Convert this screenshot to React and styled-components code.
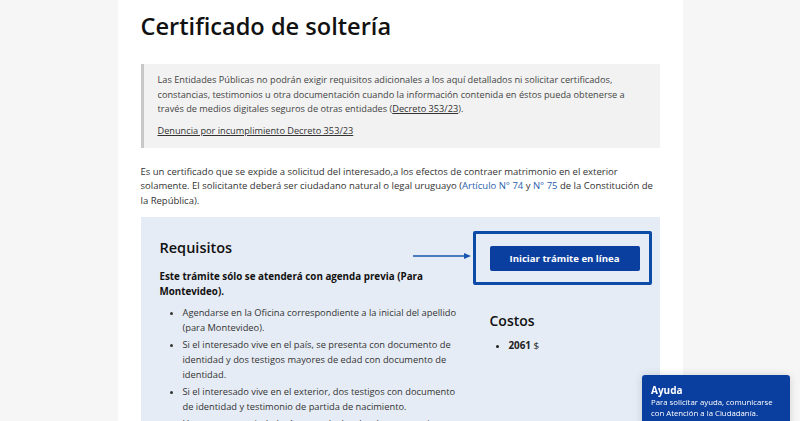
import React from "react";
import styled, { createGlobalStyle } from "styled-components";

const GlobalStyle = createGlobalStyle`
  html, body { margin: 0; padding: 0; }
  body {
    background: #f6f6f6;
    font-family: "Open Sans", "Noto Sans", sans-serif;
    color: #222;
    overflow: hidden;
  }
`;

const Page = styled.div`
  display: flex;
  justify-content: center;
  min-height: 421px;
`;

const Main = styled.main`
  width: 565px;
  background: #fff;
  padding: 0 23px;
  box-sizing: border-box;
`;

const Title = styled.h1`
  margin: 9px 0 0;
  font-size: 23.6px;
  font-weight: 600;
  line-height: 34px;
  color: #111;
`;

const Notice = styled.div`
  margin-top: 21px;
  background: #f2f2f2;
  border-left: 3px solid #c8c8c8;
  padding: 9px 18px 10px 14px;
  font-size: 9.2px;
  line-height: 14.5px;
  color: #444;
`;

const NoticeP = styled.p`
  margin: 0 0 ${p => (p.$last ? 0 : 7)}px;
`;

const DarkLink = styled.a`
  color: #333;
  text-decoration: underline;
`;

const Intro = styled.p`
  margin: 17px 0 9px;
  font-size: 9.5px;
  line-height: 14.3px;
  color: #333;
`;

const BlueLink = styled.a`
  color: #2a5fad;
  text-decoration: none;
`;

const Panel = styled.section`
  position: relative;
  background: #e6ecf5;
  display: flex;
  padding: 14px 8px 20px 19px;
  gap: 10px;
`;

const LeftCol = styled.div`
  flex: 1;
  padding-top: 7px;
`;

const RightCol = styled.div`
  width: 179px;
  display: flex;
  flex-direction: column;
`;

const H2 = styled.h2`
  margin: 0 0 11px;
  font-size: 14.5px;
  font-weight: 600;
  line-height: 20px;
  color: #111;
`;

const Strong = styled.p`
  margin: 0 0 6px;
  font-size: 9.8px;
  font-weight: 700;
  line-height: 15px;
  color: #111;
`;

const List = styled.ul`
  margin: 0;
  padding-left: 23px;
  font-size: 9.3px;
  line-height: 15px;
  color: #333;
`;

const Item = styled.li`
  margin-bottom: 2px;
`;

const ActionBox = styled.div`
  border: 3px solid #0d4ca6;
  border-radius: 2px;
  padding: 11px 9px 11px 14px;
`;

const Button = styled.button`
  width: 150px;
  height: 25px;
  border: none;
  border-radius: 2px;
  background: #0b3f9f;
  color: #fff;
  font-family: "Open Sans", sans-serif;
  font-size: 9.6px;
  font-weight: 700;
  cursor: pointer;
`;

const Arrow = styled.svg`
  position: absolute;
  left: 272px;
  top: 35px;
`;

const Costs = styled.div`
  padding: 26px 0 0 17px;
`;

const H3 = styled.h3`
  margin: 0 0 7px;
  font-size: 14px;
  font-weight: 600;
  line-height: 20px;
  color: #111;
`;

const CostList = styled.ul`
  margin: 0;
  padding-left: 19px;
  font-size: 9.8px;
  line-height: 15px;
  color: #222;
`;

const Help = styled.aside`
  position: fixed;
  right: 10px;
  bottom: -10px;
  width: 148px;
  height: 56px;
  box-sizing: border-box;
  background: #0b3f9f;
  border-radius: 3px;
  padding: 8px 9px;
  color: #fff;
  box-shadow: 0 0 8px rgba(0,0,0,0.15);
`;

const HelpTitle = styled.div`
  font-size: 10px;
  font-weight: 700;
  line-height: 14px;
`;

const HelpText = styled.div`
  font-size: 7.8px;
  line-height: 10.5px;
`;

export default function App() {
  return (
    <>
      <GlobalStyle />
      <Page>
        <Main>
          <Title>Certificado de soltería</Title>
          <Notice>
            <NoticeP>
              Las Entidades Públicas no podrán exigir requisitos adicionales a los aquí detallados ni solicitar certificados, constancias, testimonios u otra documentación cuando la información contenida en éstos pueda obtenerse a través de medios digitales seguros de otras entidades (<DarkLink href="#">Decreto 353/23</DarkLink>).
            </NoticeP>
            <NoticeP $last>
              <DarkLink href="#">Denuncia por incumplimiento Decreto 353/23</DarkLink>
            </NoticeP>
          </Notice>
          <Intro>
            Es un certificado que se expide a solicitud del interesado,a los efectos de contraer matrimonio en el exterior solamente. El solicitante deberá ser ciudadano natural o legal uruguayo (<BlueLink href="#">Artículo N° 74</BlueLink> y <BlueLink href="#">N° 75</BlueLink> de la Constitución de la República).
          </Intro>
          <Panel>
            <LeftCol>
              <H2>Requisitos</H2>
              <Strong>Este trámite sólo se atenderá con agenda previa (Para Montevideo).</Strong>
              <List>
                <Item>Agendarse en la Oficina correspondiente a la inicial del apellido (para Montevideo).</Item>
                <Item>Si el interesado vive en el país, se presenta con documento de identidad y dos testigos mayores de edad con documento de identidad.</Item>
                <Item>Si el interesado vive en el exterior, dos testigos con documento de identidad y testimonio de partida de nacimiento.</Item>
                <Item>Uruguayos con ciudadanía natural o legal, solteros que viven en el exterior.</Item>
              </List>
            </LeftCol>
            <RightCol>
              <ActionBox>
                <Button>Iniciar trámite en línea</Button>
              </ActionBox>
              <Costs>
                <H3>Costos</H3>
                <CostList>
                  <li><b>2061</b> $</li>
                </CostList>
              </Costs>
            </RightCol>
            <Arrow width="60" height="8" viewBox="0 0 60 8">
              <line x1="0" y1="4" x2="52" y2="4" stroke="#1a56b0" strokeWidth="1.5" />
              <path d="M51 1 L58 4 L51 7 Z" fill="#1a56b0" />
            </Arrow>
          </Panel>
        </Main>
      </Page>
      <Help>
        <HelpTitle>Ayuda</HelpTitle>
        <HelpText>Para solicitar ayuda, comunicarse con Atención a la Ciudadanía.</HelpText>
      </Help>
    </>
  );
}
